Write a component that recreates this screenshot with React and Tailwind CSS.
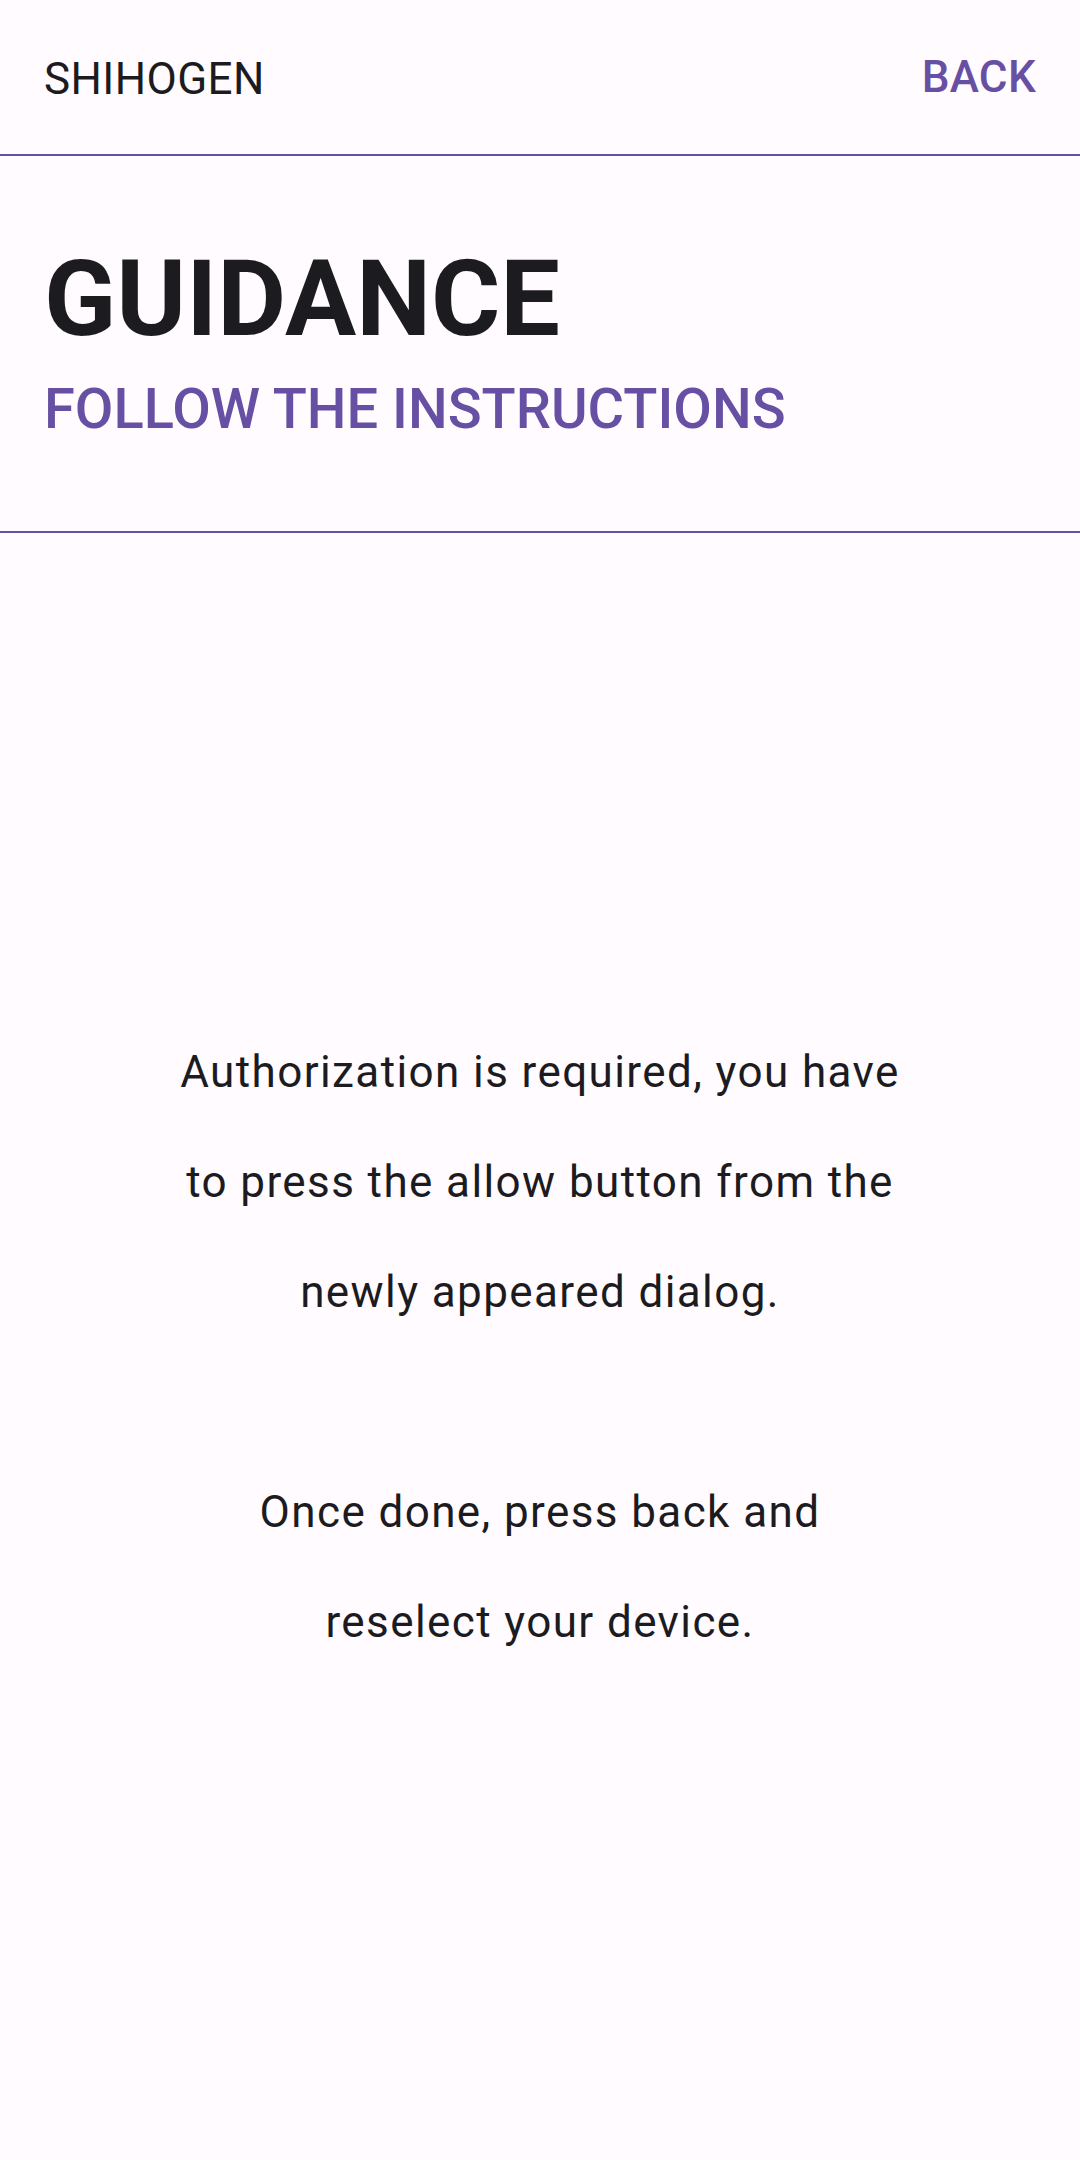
export default function App() {
  return (
    <div className="min-h-[2160px] w-[1080px] bg-[#FFFBFE] font-['Roboto',sans-serif] text-[#1C1B1F] flex flex-col">
      {/* top bar */}
      <div className="h-[156px] flex items-center justify-between px-[44px] border-b-2 border-[#6750A4]">
        <span className="pt-[4px] text-[44px] tracking-[0.4px]">SHIHOGEN</span>
        <button className="text-[44px] font-medium tracking-[0.3px] text-[#6750A4]">BACK</button>
      </div>

      {/* heading */}
      <div className="pt-[90px] pb-[94px] px-[44px] flex flex-col gap-[29px] border-b-2 border-[#6750A4]">
        <h1 className="text-[106px] leading-[106px] font-bold">GUIDANCE</h1>
        <h2 className="text-[56px] leading-[56px] font-medium text-[#6750A4]">FOLLOW THE INSTRUCTIONS</h2>
      </div>

      {/* message */}
      <div className="flex-1 flex items-center justify-center">
        <p className="text-center text-[44px] leading-[110px] tracking-[1.4px]">
          Authorization is required, you have
          <br />
          to press the allow button from the
          <br />
          newly appeared dialog.
          <br />
          <br />
          Once done, press back and
          <br />
          reselect your device.
        </p>
      </div>
    </div>
  );
}
